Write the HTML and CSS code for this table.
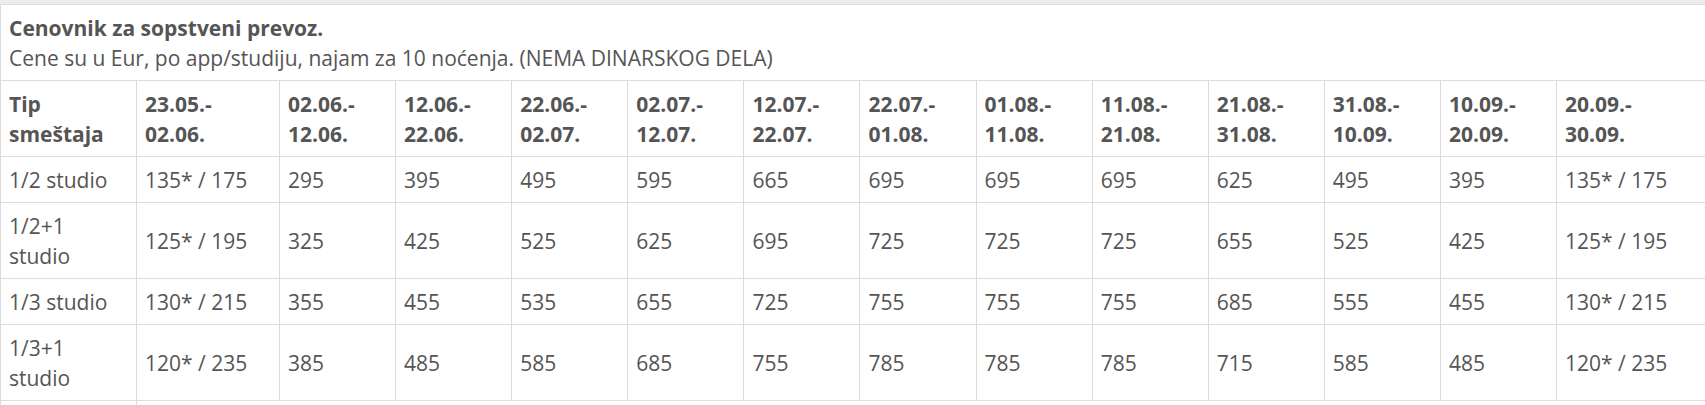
FILE: index.html
```
<!DOCTYPE html>
<html lang="sr">
<head>
<meta charset="utf-8">
<title>Cenovnik</title>
<link rel="stylesheet" href="styles.css">
</head>
<body>
<div class="page">
  <div class="wrap">
    <table class="prices">
      <colgroup>
        <col class="c-type">
        <col class="c-wide">
        <col class="c-n"><col class="c-n"><col class="c-n"><col class="c-n"><col class="c-n"><col class="c-n">
        <col class="c-n"><col class="c-n"><col class="c-n"><col class="c-n"><col class="c-n">
        <col class="c-last">
      </colgroup>
      <tr class="cap">
        <td colspan="14"><strong>Cenovnik za sopstveni prevoz.</strong><br>Cene su u Eur, po app/studiju, najam za 10 noćenja. (NEMA DINARSKOG DELA)</td>
      </tr>
      <tr class="head">
        <th>Tip smeštaja</th>
        <th>23.05.- 02.06.</th>
        <th>02.06.- 12.06.</th>
        <th>12.06.- 22.06.</th>
        <th>22.06.- 02.07.</th>
        <th>02.07.- 12.07.</th>
        <th>12.07.- 22.07.</th>
        <th>22.07.- 01.08.</th>
        <th>01.08.- 11.08.</th>
        <th>11.08.- 21.08.</th>
        <th>21.08.- 31.08.</th>
        <th>31.08.- 10.09.</th>
        <th>10.09.- 20.09.</th>
        <th class="th-last">20.09.- 30.09.</th>
      </tr>
      <tr>
        <td>1/2 studio</td><td>135* / 175</td><td>295</td><td>395</td><td>495</td><td>595</td><td>665</td><td>695</td><td>695</td><td>695</td><td>625</td><td>495</td><td>395</td><td>135* / 175</td>
      </tr>
      <tr>
        <td>1/2+1 studio</td><td>125* / 195</td><td>325</td><td>425</td><td>525</td><td>625</td><td>695</td><td>725</td><td>725</td><td>725</td><td>655</td><td>525</td><td>425</td><td>125* / 195</td>
      </tr>
      <tr>
        <td>1/3 studio</td><td>130* / 215</td><td>355</td><td>455</td><td>535</td><td>655</td><td>725</td><td>755</td><td>755</td><td>755</td><td>685</td><td>555</td><td>455</td><td>130* / 215</td>
      </tr>
      <tr>
        <td>1/3+1 studio</td><td>120* / 235</td><td>385</td><td>485</td><td>585</td><td>685</td><td>755</td><td>785</td><td>785</td><td>785</td><td>715</td><td>585</td><td>485</td><td>120* / 235</td>
      </tr>
      <tr class="more">
        <td>&nbsp;</td><td colspan="13">&nbsp;</td>
      </tr>
    </table>
  </div>
</div>
</body>
</html>
```

FILE: styles.css
```
html, body {
  margin: 0;
  padding: 0;
  background: #ececec;
}

.page {
  padding-top: 4px;
  height: 401px;
  overflow: hidden;
}

.wrap {
  background: #fff;
  overflow: hidden;
  width: 100%;
  height: 100%;
}

.prices {
  border-collapse: collapse;
  table-layout: fixed;
  width: 1709px;
  font-family: "Open Sans", "DejaVu Sans", sans-serif;
  font-size: 21px;
  line-height: 30px;
  color: #555;
}

.c-type { width: 136px; }
.c-wide { width: 143px; }
.c-n { width: 116.1px; }
.c-last { width: 152px; }

.prices td,
.prices th {
  border: 1px solid #dcdcdc;
  padding: 8px 8px 7px 8px;
  text-align: left;
  vertical-align: middle;
}

.prices th {
  font-weight: 700;
  vertical-align: top;
}

.prices .th-last {
  padding-right: 24px;
}

.cap td strong {
  font-weight: 700;
}

.more td {
  height: 60px;
}
```
